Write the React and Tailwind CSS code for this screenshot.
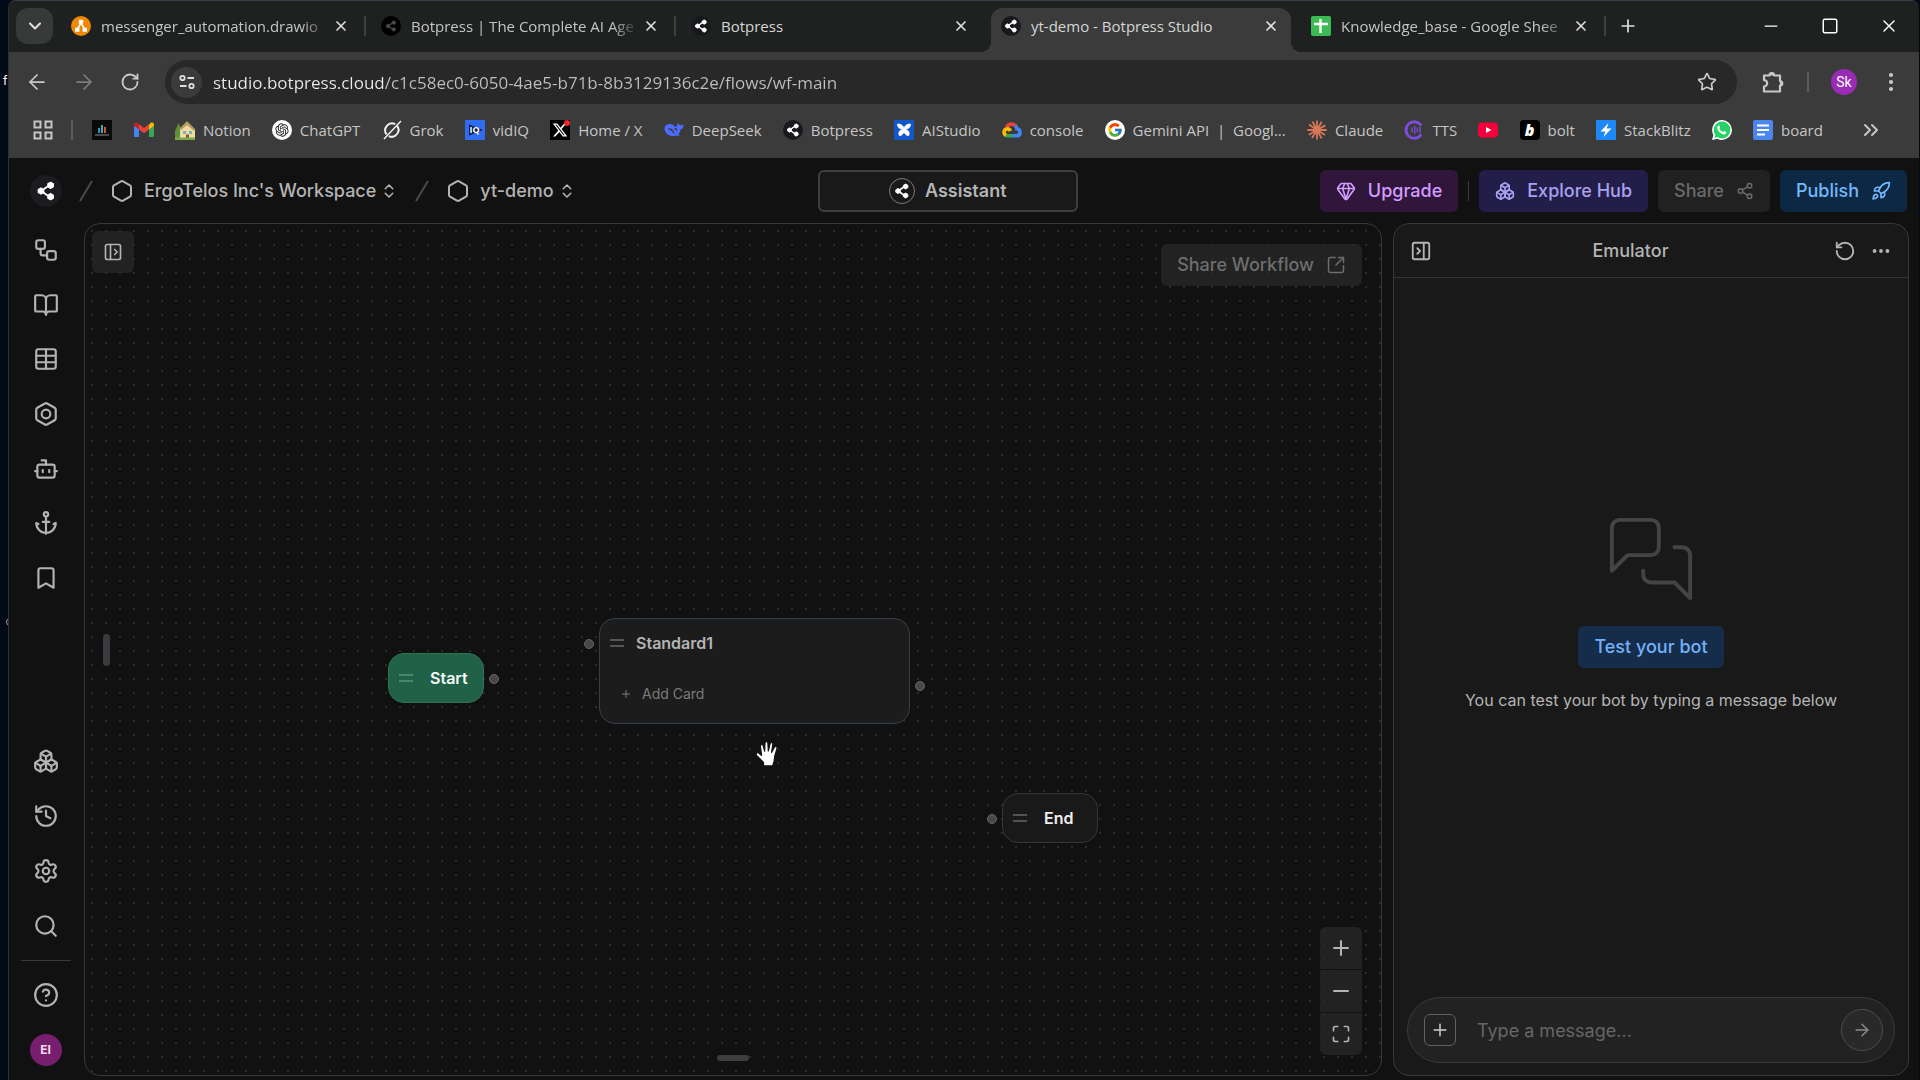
import React from "react";
import {
  Anchor,
  ArrowLeft,
  ArrowRight,
  Bolt,
  BookOpen,
  Bookmark,
  Bot,
  Boxes,
  ChevronDown,
  ChevronsRight,
  ChevronsUpDown,
  CircleHelp,
  Ellipsis,
  EllipsisVertical,
  Gem,
  Hexagon,
  History,
  Maximize,
  Minus,
  PanelLeftOpen,
  PanelRightClose,
  Plus,
  Rocket,
  RotateCcw,
  RotateCw,
  Search,
  Settings,
  Share2,
  Square,
  SquareArrowOutUpRight,
  Star,
  Table,
  Workflow,
  X,
} from "lucide-react";
import { FcGoogle } from "react-icons/fc";
import { FaXTwitter } from "react-icons/fa6";
import { RiOpenaiFill } from "react-icons/ri";

/* ---------- logos ---------- */

const BotpressMark = ({ className }) => (
  <svg viewBox="0 0 24 24" className={className} aria-hidden="true">
    <path d="M6 12 17 4.500M6 12l11 7.500" stroke="currentColor" strokeWidth="2.400" />
    <path
      d="M6 8.300 9.300 10.200v3.600L6 15.700l-3.300-1.900v-3.600ZM17.500 1.500l3.300 1.900V7l-3.300 1.900L14.200 7V3.400ZM17.500 15.100l3.300 1.900v3.600l-3.300 1.900-3.300-1.900V17Z"
      fill="currentColor"
      stroke="currentColor"
      strokeWidth="1.400"
      strokeLinejoin="round"
    />
  </svg>
);

const BotpressFavicon = () => (
  <span className="flex size-5 items-center justify-center rounded-full bg-[#17191c] text-white">
    <BotpressMark className="size-[14px]" />
  </span>
);

const DarkBotpressFavicon = () => (
  <span className="flex size-5 items-center justify-center rounded-full bg-black text-[#4a4a4a]">
    <BotpressMark className="size-3" />
  </span>
);

const DrawioIcon = () => (
  <svg viewBox="0 0 20 20" className="size-5">
    <circle cx="10" cy="10" r="10" fill="#f08705" />
    <path d="M10 7 6.500 13M10 7l3.500 6" stroke="#fff" strokeWidth="1.500" />
    <path d="M7.800 3.800h4.400v4H7.800zM4 11.700h4.400v4H4zM11.600 11.700H16v4h-4.400z" fill="#fff" />
  </svg>
);

const SheetsIcon = () => (
  <svg viewBox="0 0 20 20" className="size-5">
    <rect width="20" height="20" rx="2" fill="#3cba54" />
    <path d="M9.500 3v14M3 8h14" stroke="#fff" strokeWidth="2.400" />
  </svg>
);

const DocsIcon = () => (
  <svg viewBox="0 0 20 20" className="size-5">
    <rect width="20" height="20" rx="2" fill="#4a86ee" />
    <path d="M4 5.500h12M4 10h12M4 14.500h8" stroke="#fff" strokeWidth="2" />
  </svg>
);

const ChartFavicon = () => (
  <svg viewBox="0 0 20 20" className="size-5">
    <rect width="20" height="20" fill="#0a0a0a" />
    <path d="M7 13V8" stroke="#3a8fb0" strokeWidth="2" />
    <path d="M10 13V5" stroke="#4aa8c0" strokeWidth="2" />
    <path d="M13 13V7" stroke="#c65a3a" strokeWidth="2" />
    <path d="M3 15h14" stroke="#8a8a8a" />
  </svg>
);

const GmailIcon = () => (
  <svg viewBox="0 0 20 20" className="size-5">
    <path d="M0 5v10.500C0 16.500.6 17 1.500 17H5V8.500Z" fill="#4285f4" />
    <path d="M20 5v10.500c0 1-.6 1.500-1.500 1.500H15V8.500Z" fill="#34a853" />
    <path d="M15 5v4.500l5-3.700V4.500c0-1.800-2-2.700-3.400-1.700Z" fill="#fbbc04" />
    <path d="m5 9.500 5 3.700 5-3.700V4.300l-5 3.700-5-3.700Z" fill="#ea4335" />
    <path d="M0 4.500v1.300l5 3.700V4.300L3.400 2.800C2 1.800 0 2.700 0 4.500Z" fill="#c5221f" />
  </svg>
);

const HouseIcon = () => (
  <svg viewBox="0 0 20 20" className="size-5">
    <path d="M3.500 3 7 11v8H0v-8Z" fill="#5f8f3a" />
    <path d="m12 2 8 8v9H5V9Z" fill="#efdca0" />
    <path d="m12 1 8 8-1.500 1.500L12 5l-6 5-1.500-1.500Z" fill="#b99b62" />
    <path d="M8 11h3v3H8zM14 11h3v3h-3z" fill="#7fb0c8" />
    <path d="M11 14.500h3V19h-3z" fill="#8a5a32" />
    <path d="M0 17.500h20V20H0z" fill="#7aa84a" />
  </svg>
);

const ChatGptIcon = () => (
  <span className="flex size-5 items-center justify-center rounded-full bg-white text-[#1a1a1a]">
    <RiOpenaiFill className="size-4" />
  </span>
);

const GrokIcon = () => (
  <svg viewBox="0 0 20 20" className="size-5" fill="none" stroke="#f1f1f1" strokeWidth="2">
    <path d="M14.800 5.500a6.800 6.800 0 0 1-8 10.600M4.600 14.300a6.800 6.800 0 0 1 8.600-10.100" />
    <path d="M2 19 19 1" strokeWidth="1.500" />
  </svg>
);

const VidIqIcon = () => (
  <span className="relative flex size-5 items-center justify-center bg-[#2f6cf0]">
    <svg viewBox="0 0 20 20" className="absolute size-5">
      <path d="M4 4.500 18 10 4 15.500Z" fill="#0b1c4a" />
    </svg>
    <span className="relative text-[9px] font-bold text-white">IQ</span>
  </span>
);

const XIcon = () => (
  <span className="relative flex size-5 items-center justify-center bg-black text-white">
    <FaXTwitter className="size-4" />
    <span className="absolute top-0 right-0 size-[6px] rounded-full bg-[#f4212e]" />
  </span>
);

const DeepSeekIcon = () => (
  <svg viewBox="0 0 20 20" className="size-5">
    <path
      d="M.5 8.500C.5 5.700 3 4 6 4c2 0 3 .8 4.600 2.200.9.800 1.700.6 2.300-.3.500-.8.600-1.700.6-2.900 1 .3 1.600 1.200 2.200 2 .9.400 2.400.5 3.900-.8.200 2.600-.9 4.800-3.100 5.300-.2 2.200-1 3.600-2.300 4.700.7.500 1.600.6 2.200.9-1.300 1-3 .9-4.500.3C6.500 17.300.5 14 .5 8.500Z"
      fill="#4d6bfe"
    />
    <path d="M4.500 9c2.500-.3 4.500 2 5.500 4.500M10.500 8.500c1.500.2 2.200 1.200 2.200 2.300" stroke="#3b3b3b" strokeWidth="1.400" fill="none" />
  </svg>
);

const AiStudioIcon = () => (
  <svg viewBox="0 0 20 20" className="size-5">
    <rect width="20" height="20" fill="#1257c9" />
    <path
      d="M10 8.500C9.500 6 7 3.800 3.500 4c0 2.200.8 3.900 3 4.700 1 .4 1.800.6 2.600 1.300-1.700-.2-3.100.3-3.800 1.500-.7 1.300-.6 2.700.2 4.300C8 15.500 9.500 13.500 10 11.500c.5 2 2 4 4.500 4.300.8-1.600.9-3 .2-4.300-.7-1.200-2.100-1.700-3.800-1.500.8-.7 1.600-.9 2.600-1.300 2.200-.8 3-2.500 3-4.700-3.500-.2-6 2-6.500 4.500Z"
      fill="#fff"
      stroke="#fff"
      strokeWidth=".8"
    />
  </svg>
);

const CloudIcon = () => (
  <svg viewBox="0 0 20 20" className="size-5" fill="none" strokeWidth="3.600">
    <path d="M4.500 7.500C6 3.800 10.500 3 13.500 5.800" stroke="#ea4335" />
    <path d="M13.200 5.500c1 .9 1.500 2 1.700 3.300 4 .2 4.300 6.700 0 6.900H10" stroke="#4285f4" />
    <path d="M10.500 15.700H5.600c-.8 0-1.300-.2-1.900-.5" stroke="#34a853" />
    <path d="M4 15.500C1.300 14 1.300 9.800 4.700 9c1.700-.3 3 .6 3.700 2" stroke="#fbbc05" />
  </svg>
);

const GoogleIcon = () => (
  <span className="flex size-5 items-center justify-center rounded-full bg-white">
    <FcGoogle className="size-4" />
  </span>
);

const ClaudeIcon = () => (
  <svg viewBox="0 0 20 20" className="size-5" stroke="#d97757" strokeWidth="1.800">
    <path d="M10 10V.5M10 10l4.700-8.300M10 10l8.400-4.600M10 10h9.700M10 10l8 5M10 10l4.600 8.400M10 10v9.500M10 10l-5 8M10 10l-8.200 4.700M10 10H.4M10 10 2 4.600M10 10 5.600 1.500" />
  </svg>
);

const TtsIcon = () => (
  <svg viewBox="0 0 20 20" className="size-5" fill="none" stroke="#7c4ddb" strokeLinecap="round">
    <path d="M16.500 4.500A8.300 8.300 0 1 0 16.500 15.500" strokeWidth="3" />
    <path d="M8 8v4M10.700 6.500v7M13.400 8v4M16.100 7v6" strokeWidth="1.400" />
  </svg>
);

const YouTubeIcon = () => (
  <svg viewBox="0 0 20 20" className="size-5">
    <rect y="2.500" width="20" height="15" rx="4" fill="#f5003d" />
    <path d="m8 7 5.500 3L8 13Z" fill="#fff" />
  </svg>
);

const BoltIcon = () => (
  <span className="flex size-5 items-center justify-center rounded bg-black text-base leading-5 font-extrabold text-white italic">
    b
  </span>
);

const StackBlitzIcon = () => (
  <svg viewBox="0 0 20 20" className="size-5">
    <rect width="20" height="20" rx="1" fill="#1e88f7" />
    <path d="M12.500 3 4.500 11.500h4.800L7.500 17l8-8.500h-4.800Z" fill="#fff" />
  </svg>
);

const WhatsAppIcon = () => (
  <svg viewBox="0 0 20 20" className="size-5">
    <path d="M10 0a10 10 0 0 1 0 20c-1.700 0-3.300-.4-4.700-1.200L0 20l1.400-5A10 10 0 0 1 10 0Z" fill="#fff" />
    <path d="M10 1.600a8.400 8.400 0 0 1 0 16.800c-1.600 0-3.100-.5-4.400-1.300L2.400 18l.9-3.100A8.400 8.400 0 0 1 10 1.600Z" fill="#25d366" />
    <path
      d="M7 5.300c.5 0 .9 1.700 1 2.100.1.500-.8 1-.6 1.400.8 1.500 1.900 2.500 3.500 3.200.5.200 1-1 1.400-.9.400.1 2 .8 2 1.200 0 1.400-1.300 2.200-2.500 2.100-3.300-.5-6-3.100-6.500-6.300C5.200 6.800 6 5.300 7 5.300Z"
      fill="#fff"
    />
  </svg>
);

const HandCursor = ({ className }) => (
  <svg viewBox="0 0 24 24" className={className} aria-hidden="true">
    <path
      d="M8.500 23v-3L2.300 13.600c-1.200-1.500.7-3 2.100-1.800l2.400 2L5.700 5.500c-.1-1.700 2-2 2.400-.4L9.500 10l.3-7.400c.1-1.600 2.400-1.600 2.500 0l.4 7.200 1.700-6.600c.4-1.500 2.600-1.100 2.300.5l-1.100 7.400 2.600-4.600c.8-1.400 2.700-.5 2.200 1L18.500 14l-.7 5-1.300 4Z"
      fill="#fff"
      stroke="#111"
      strokeWidth="1"
      strokeLinejoin="round"
    />
  </svg>
);

/* ---------- browser chrome ---------- */

const tabs = [
  { title: "messenger_automation.drawio", icon: DrawioIcon, fade: true },
  { title: "Botpress | The Complete AI Age", icon: DarkBotpressFavicon, fade: true },
  { title: "Botpress", icon: BotpressFavicon },
  { title: "yt-demo - Botpress Studio", icon: BotpressFavicon, active: true },
  { title: "Knowledge_base - Google Shee", icon: SheetsIcon, fade: true },
];

const bookmarks = [
  { icon: HouseIcon, label: "Notion" },
  { icon: ChatGptIcon, label: "ChatGPT" },
  { icon: GrokIcon, label: "Grok" },
  { icon: VidIqIcon, label: "vidIQ" },
  { icon: XIcon, label: "Home / X" },
  { icon: DeepSeekIcon, label: "DeepSeek" },
  { icon: BotpressFavicon, label: "Botpress" },
  { icon: AiStudioIcon, label: "AIStudio" },
  { icon: CloudIcon, label: "console" },
  { icon: GoogleIcon, label: "Gemini API  |  Googl..." },
  { icon: ClaudeIcon, label: "Claude" },
  { icon: TtsIcon, label: "TTS" },
  { icon: YouTubeIcon, name: "YouTube" },
  { icon: BoltIcon, label: "bolt" },
  { icon: StackBlitzIcon, label: "StackBlitz" },
  { icon: WhatsAppIcon, name: "WhatsApp" },
  { icon: DocsIcon, label: "board" },
];

const Tab = ({ title, icon: Icon, active, fade, divider }) => (
  <div className="relative flex h-11 max-w-[310px] min-w-0 flex-1 px-[5px]">
    <div
      className={
        active
          ? "flex min-w-0 flex-1 items-center rounded-t-xl bg-[#3b3b3b] pr-3 pb-2 pl-[10px]"
          : "flex min-w-0 flex-1 items-center pr-3 pb-2 pl-[10px]"
      }
    >
      <Icon />
      <span
        className={
          fade
            ? "ml-[10px] flex-1 overflow-hidden mask-[linear-gradient(to_right,black_88%,transparent)] text-[15px] leading-5 whitespace-nowrap text-[#c4c6c4]"
            : "ml-[10px] flex-1 overflow-hidden text-[15px] leading-5 whitespace-nowrap text-[#d6d6d6]"
        }
      >
        {title}
      </span>
      <button aria-label={`Close ${title}`} className="ml-1 text-[#e0e0e0]">
        <X className="size-4" strokeWidth={2.5} />
      </button>
    </div>
    {active && (
      <>
        <span className="absolute bottom-0 -left-[5px] size-[10px] bg-[radial-gradient(circle_at_top_left,transparent_10px,#3b3b3b_10px)]" />
        <span className="absolute -right-[5px] bottom-0 size-[10px] bg-[radial-gradient(circle_at_top_right,transparent_10px,#3b3b3b_10px)]" />
      </>
    )}
    {divider && <span className="absolute top-2 right-0 h-5 w-[2px] bg-[#3f4140]" />}
  </div>
);

const TabStrip = () => (
  <div className="flex h-[51px] items-end bg-[#1f2120] pl-[7px] text-[#e0e0e0]">
    <button
      aria-label="Search tabs"
      className="mr-[3px] mb-2 flex h-9 w-[37px] items-center justify-center rounded-xl bg-[#383a39]"
    >
      <ChevronDown className="size-5" strokeWidth={2.5} />
    </button>
    {tabs.map((tab, i) => (
      <Tab key={tab.title} {...tab} divider={i !== 2 && i !== 3} />
    ))}
    <button aria-label="New tab" className="mb-4 ml-3">
      <Plus className="size-5" />
    </button>
    <div className="mb-4 ml-auto flex items-center gap-10 pr-5 text-white">
      <button aria-label="Minimize">
        <Minus className="size-5" strokeWidth={1.5} />
      </button>
      <button aria-label="Maximize">
        <Square className="size-[18px]" strokeWidth={2} />
      </button>
      <button aria-label="Close window">
        <X className="size-5" strokeWidth={1.75} />
      </button>
    </div>
  </div>
);

const AddressBar = () => (
  <div className="flex h-15 items-center bg-[#3b3b3b] pr-4 pl-4 text-[#c9c9c9]">
    <button aria-label="Back" className="mr-[23px]">
      <ArrowLeft className="size-6" strokeWidth={1.75} />
    </button>
    <button aria-label="Forward" className="mr-6 text-[#7c7c7c]">
      <ArrowRight className="size-6" strokeWidth={1.75} />
    </button>
    <button aria-label="Reload">
      <RotateCw className="size-5" strokeWidth={2.2} />
    </button>
    <div className="ml-[25px] flex h-11 flex-1 items-center rounded-full bg-[#282828] pr-5 pl-[6px]">
      <button
        aria-label="Site information"
        className="mr-[11px] flex size-[31px] items-center justify-center rounded-full bg-[#3b3b3b]"
      >
        <svg viewBox="0 0 16 16" className="size-4" fill="none" stroke="#dedede" strokeWidth="1.800">
          <circle cx="3.500" cy="4" r="2.200" />
          <circle cx="12.500" cy="12" r="2.200" />
          <path d="M8.500 4H15M1 12h6.500" />
        </svg>
      </button>
      <input
        aria-label="Address"
        defaultValue="studio.botpress.cloud/c1c58ec0-6050-4ae5-b71b-8b3129136c2e/flows/wf-main"
        className="h-8 flex-1 bg-[linear-gradient(to_right,#ececec_172px,#bfbfbf_172px)] bg-clip-text text-[17px] text-transparent outline-none"
      />
      <button aria-label="Bookmark this tab">
        <Star className="size-5" />
      </button>
    </div>
    <button aria-label="Extensions" className="mr-[22px] ml-6">
      <svg viewBox="0 0 24 24" className="size-6" fill="none" stroke="currentColor" strokeWidth="2.200" strokeLinejoin="round">
        <path d="M3 5.500h5.500a2.300 2.300 0 0 1 4.600 0H19V11a2.300 2.300 0 0 1 0 4.600V21.500H3v-5a3.200 3.200 0 0 0 0-6.400Z" />
        <path d="M9.500 4.500a1.500 1.500 0 0 1 2.600 0ZM20 12a1.500 1.500 0 0 1 0 2.600Z" fill="currentColor" />
      </svg>
    </button>
    <span className="mr-[22px] h-5 w-[2px] bg-[#5c5c5c]" />
    <button
      aria-label="Profile"
      className="mr-[22px] flex size-[26px] items-center justify-center rounded-full bg-[#9a2bb5] font-[Roboto] text-sm text-white"
    >
      Sk
    </button>
    <button aria-label="Browser menu">
      <EllipsisVertical className="size-6" strokeWidth={2.2} />
    </button>
  </div>
);

const BookmarksBar = () => (
  <div className="flex h-[46px] items-start bg-[#3b3b3b] pt-2 pr-9 pl-6 text-[#c6c6c6]">
    <div className="flex h-5 flex-1 items-center">
      <button aria-label="Apps">
        <svg viewBox="0 0 20 20" className="size-5" fill="none" stroke="currentColor" strokeWidth="2">
          <path d="M1.500 1.500h6v6h-6zM12.500 1.500h6v6h-6zM1.500 12.500h6v6h-6zM12.500 12.500h6v6h-6z" />
        </svg>
      </button>
      <span className="ml-[18px] h-5 w-[2px] bg-[#5c5c5c]" />
      <a href="#" aria-label="Dashboard" className="ml-[19px]">
        <ChartFavicon />
      </a>
      <a href="#" aria-label="Gmail" className="ml-[22px]">
        <GmailIcon />
      </a>
      <div className="ml-[21px] flex flex-1 items-center justify-between">
        {bookmarks.map(({ icon: Icon, label, name }) => (
          <a key={label || name} href="#" aria-label={label || name} className="flex items-center gap-2">
            <Icon />
            {label && <span className="text-[15px] leading-5 whitespace-pre">{label}</span>}
          </a>
        ))}
      </div>
      <button aria-label="More bookmarks" className="ml-9">
        <ChevronsRight className="size-6" />
      </button>
    </div>
  </div>
);

/* ---------- studio ---------- */

const Crumb = ({ children }) => (
  <button className="flex items-center text-lg leading-6 font-medium text-[#b4b4b4]">
    <Hexagon className="size-6" strokeWidth={2} />
    <span className="ml-[10px]">{children}</span>
    <ChevronsUpDown className="ml-1 size-[18px]" />
  </button>
);

const Slash = () => (
  <svg viewBox="0 0 14 22" className="h-[22px] w-[14px]" stroke="#4a4a4a" strokeWidth="2">
    <path d="M13 1 1 21" />
  </svg>
);

const TopBar = () => (
  <header className="grid h-[65px] grid-cols-[19fr_260px_20fr] items-center pr-3 pl-[21px]">
    <div className="flex items-center">
      <a
        href="#"
        aria-label="Botpress home"
        className="flex size-8 items-center justify-center rounded-full bg-[#1a1c1f] text-white"
      >
        <BotpressMark className="size-5" />
      </a>
      <div className="ml-[17px] flex items-center gap-[17px]">
        <Slash />
        <Crumb>ErgoTelos Inc's Workspace</Crumb>
        <Slash />
        <Crumb>yt-demo</Crumb>
      </div>
    </div>
    <button className="flex h-[42px] items-center justify-center gap-[10px] rounded-md border-2 border-[#3e3e3e] bg-[#191919] text-lg font-semibold text-[#b4b4b4]">
      <span className="flex size-[26px] items-center justify-center rounded-full border border-[#7a7a7a] text-white">
        <BotpressMark className="size-4" />
      </span>
      Assistant
    </button>
    <div className="flex items-center justify-end text-lg font-medium">
      <button className="flex h-[42px] items-center gap-3 rounded-md bg-[#31163c] px-4 text-[#d19dff]">
        <Gem className="size-5" strokeWidth={2} />
        Upgrade
      </button>
      <span className="mx-[10px] h-5 w-px bg-[#3a3a3a]" />
      <button className="flex h-[42px] items-center gap-3 rounded-md bg-[#221d49] px-4 text-[#aaa0ee]">
        <Boxes className="size-5" strokeWidth={2} />
        Explore Hub
      </button>
      <button className="ml-[10px] flex h-[42px] items-center gap-3 rounded-md bg-[#212121] px-4 text-[#6a6a6a]">
        Share
        <Share2 className="size-[18px]" strokeWidth={2} />
      </button>
      <button className="ml-[10px] flex h-[42px] items-center gap-3 rounded-md bg-[#0d2844] px-4 text-[#74b8fb]">
        Publish
        <Rocket className="size-5" strokeWidth={2} />
      </button>
    </div>
  </header>
);

const mainNav = [
  { icon: Workflow, label: "Workflows" },
  { icon: BookOpen, label: "Knowledge bases" },
  { icon: Table, label: "Tables" },
  { icon: Bolt, label: "Integrations" },
  { icon: Bot, label: "Agents" },
  { icon: Anchor, label: "Hooks" },
  { icon: Bookmark, label: "Library" },
];

const toolNav = [
  { icon: Boxes, label: "Hub" },
  { icon: History, label: "Versions" },
  { icon: Settings, label: "Bot settings" },
  { icon: Search, label: "Search" },
];

const NavButton = ({ icon: Icon, label }) => (
  <button aria-label={label} className="flex w-full flex-1 items-center justify-center">
    <Icon className="size-[26px]" strokeWidth={2} />
  </button>
);

const Sidebar = () => (
  <nav className="flex w-[75px] flex-col items-center pr-0.5 text-[#b2b2b2]">
    <div className="flex h-[382px] w-full flex-col">
      {mainNav.map((item) => (
        <NavButton key={item.label} {...item} />
      ))}
    </div>
    <div className="mt-auto flex h-[219px] w-full flex-col">
      {toolNav.map((item) => (
        <NavButton key={item.label} {...item} />
      ))}
    </div>
    <span className="mt-[7px] h-px w-[50px] bg-[#3a3a3a]" />
    <div className="mt-[6px] flex h-[55px] w-full">
      <NavButton icon={CircleHelp} label="Help" />
    </div>
    <button
      aria-label="Account"
      className="mt-3 mb-[10px] flex size-8 items-center justify-center rounded-full bg-[#771f6e] text-xs font-bold text-[#f0dced]"
    >
      EI
    </button>
  </nav>
);

const Grip = () => (
  <svg viewBox="0 0 14 8" className="h-2 w-[14px] opacity-50" stroke="currentColor" strokeWidth="1.500">
    <path d="M0 1h14M0 7h14" />
  </svg>
);

const Port = ({ className }) => (
  <span className={`absolute size-[10px] rounded-full border border-[#666] bg-[#484848] ${className}`} />
);

const ZoomButton = ({ label, children }) => (
  <button aria-label={label} className="flex h-[42px] w-[42px] items-center justify-center bg-[#2a2a2a]/70">
    {children}
  </button>
);

const Canvas = () => (
  <main className="relative flex-1 overflow-hidden rounded-2xl border border-[#383838] bg-[#111] bg-[radial-gradient(circle,#2b2b2b_1px,transparent_1px)] bg-[length:14px_14px] text-[#b4b4b4]">
    <button
      aria-label="Open explorer"
      className="absolute top-[7px] left-[7px] flex size-[42px] items-center justify-center rounded-md bg-[#2a2a2a]/70"
    >
      <PanelLeftOpen className="size-5" />
    </button>
    <button className="absolute top-5 right-[19px] flex h-[42px] items-center gap-3 rounded-md bg-[#2a2a2a]/70 px-4 text-lg font-medium text-[#6e6e6e]">
      Share Workflow
      <SquareArrowOutUpRight className="size-5" strokeWidth={1.75} />
    </button>

    <div className="absolute top-[429px] left-[303px] flex h-[50px] w-24 items-center rounded-2xl border border-[#2b7555] bg-[#206148] pl-[10px] text-[#8cc7ad]">
      <Grip />
      <span className="ml-[17px] text-base font-semibold text-[#f4fbf8]">Start</span>
      <Port className="top-5 -right-4" />
    </div>

    <div className="absolute top-[394px] left-[514px] flex h-[106px] w-[311px] flex-col rounded-2xl border border-[#34414b] bg-[#1c1c1c] pt-3 pl-[10px]">
      <div className="flex items-center">
        <Grip />
        <span className="ml-3 text-base leading-6 font-semibold">Standard1</span>
      </div>
      <button className="mt-[27px] ml-[10px] flex items-center gap-[10px] self-start text-sm leading-6 text-[#7b7b7b]">
        <Plus className="size-3" strokeWidth={2} />
        Add Card
      </button>
      <Port className="top-5 -left-4" />
      <Port className="top-[62px] -right-4" />
    </div>

    <div className="absolute top-[569px] left-[917px] flex h-[50px] w-24 items-center rounded-2xl border border-[#363636] bg-[#191919] pl-[10px]">
      <Grip />
      <span className="ml-[17px] text-base font-semibold text-[#eee]">End</span>
      <Port className="top-5 -left-4" />
    </div>

    <HandCursor className="absolute top-[516px] left-[669px] size-[27px]" />

    <span className="absolute top-[410px] left-[18px] h-8 w-[7px] rounded-sm bg-[#3a3a3e]" />
    <span className="absolute bottom-[14px] left-1/2 h-[6px] w-8 -translate-x-1/2 rounded-full bg-[#3d3d3d]" />

    <div className="absolute right-[19px] bottom-5 flex flex-col gap-px overflow-hidden rounded-md">
      <ZoomButton label="Zoom in">
        <Plus className="size-6" strokeWidth={2} />
      </ZoomButton>
      <ZoomButton label="Zoom out">
        <Minus className="size-6" strokeWidth={2} />
      </ZoomButton>
      <ZoomButton label="Fit view">
        <Maximize className="size-5" />
      </ZoomButton>
    </div>
  </main>
);

const Emulator = () => (
  <aside className="flex w-[516px] flex-col rounded-2xl border border-[#383838] bg-[#191919] text-[#b4b4b4]">
    <div className="flex h-[54px] items-center border-b border-[#343434] px-4">
      <button aria-label="Close emulator">
        <PanelRightClose className="size-[22px]" strokeWidth={2} />
      </button>
      <h2 className="flex-1 pr-[5px] text-center text-lg font-medium">Emulator</h2>
      <button aria-label="Restart conversation" className="mr-[14px]">
        <RotateCcw className="size-[22px]" strokeWidth={2} />
      </button>
      <button aria-label="Emulator options">
        <Ellipsis className="size-[22px]" strokeWidth={2.2} />
      </button>
    </div>
    <div className="flex flex-1 flex-col items-center justify-center pb-10">
      <svg
        viewBox="0 0 24 24"
        className="size-[94px]"
        fill="none"
        stroke="#444"
        strokeWidth="1"
        strokeLinecap="round"
        strokeLinejoin="round"
      >
        <path d="M14 9a2 2 0 0 1-2 2H6l-4 4V4c0-1.100.9-2 2-2h8a2 2 0 0 1 2 2Z" />
        <path d="M18 9h2a2 2 0 0 1 2 2v11l-4-4h-6a2 2 0 0 1-2-2v-1" />
      </svg>
      <button className="mt-5 h-[42px] rounded-md bg-[#152d4a] px-4 text-lg font-medium text-[#74b1fb]">Test your bot</button>
      <p className="mt-5 text-base leading-6">You can test your bot by typing a message below</p>
    </div>
    <form
      onSubmit={(e) => e.preventDefault()}
      className="m-3 mx-[13px] flex h-[66px] items-center rounded-full border border-[#3a3a3a] bg-[#222] pr-[11px] pl-4"
    >
      <button
        type="button"
        aria-label="Add attachment"
        className="flex size-8 items-center justify-center rounded-md border border-[#606060] text-[#d0d0d0]"
      >
        <Plus className="size-5" strokeWidth={1.75} />
      </button>
      <input
        aria-label="Message"
        placeholder="Type a message..."
        className="ml-[21px] h-10 min-w-0 flex-1 text-lg outline-none placeholder:text-[#666]"
      />
      <button
        aria-label="Send"
        className="flex size-[42px] items-center justify-center rounded-full border border-[#4c4c4c] bg-[#292929] text-[#8c8c8c]"
      >
        <ArrowRight className="size-5" strokeWidth={1.75} />
      </button>
    </form>
  </aside>
);

const App = () => {
  return (
    <div className="flex h-screen overflow-hidden bg-[#020a18] pr-px font-[Inter,sans-serif]">
      <div className="relative w-2 text-xs text-white">
        <span className="absolute top-[73px] left-[3px]">f</span>
        <span className="absolute top-[618px] left-[6px] size-2 rounded-full border border-[#a0a0a0]" />
      </div>
      <div className="relative flex min-w-0 flex-1 flex-col overflow-hidden rounded-t-lg border-t border-l border-t-[#3a3f4a] border-l-[#2c2f36] bg-[#111]">
        <div className="font-['Open_Sans',sans-serif]">
          <TabStrip />
          <AddressBar />
          <BookmarksBar />
        </div>
        <div className="flex min-h-0 flex-1 flex-col">
          <TopBar />
          <div className="flex min-h-0 flex-1 pr-[10px] pb-1">
            <Sidebar />
            <Canvas />
            <div className="w-[11px]" />
            <Emulator />
          </div>
        </div>
      </div>
    </div>
  );
};

export default App;
